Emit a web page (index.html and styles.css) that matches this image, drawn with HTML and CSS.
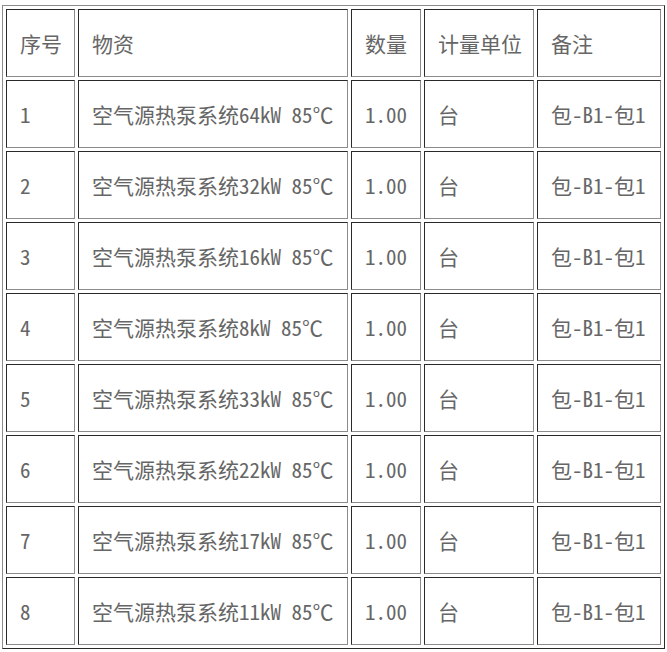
FILE: index.html
```html
<!DOCTYPE html>
<html lang="zh-CN">
<head>
<meta charset="utf-8">
<title>物资清单</title>
<link rel="stylesheet" href="styles.css">
</head>
<body>
<table class="grid">
  <colgroup>
    <col class="c-no">
    <col class="c-name">
    <col class="c-qty">
    <col class="c-unit">
    <col class="c-note">
  </colgroup>
  <thead>
    <tr><th>序号</th><th>物资</th><th>数量</th><th>计量单位</th><th>备注</th></tr>
  </thead>
  <tbody>
    <tr><td>1</td><td>空气源热泵系统64kW 85℃</td><td>1.00</td><td>台</td><td>包-B1-包1</td></tr>
    <tr><td>2</td><td>空气源热泵系统32kW 85℃</td><td>1.00</td><td>台</td><td>包-B1-包1</td></tr>
    <tr><td>3</td><td>空气源热泵系统16kW 85℃</td><td>1.00</td><td>台</td><td>包-B1-包1</td></tr>
    <tr><td>4</td><td>空气源热泵系统8kW 85℃</td><td>1.00</td><td>台</td><td>包-B1-包1</td></tr>
    <tr><td>5</td><td>空气源热泵系统33kW 85℃</td><td>1.00</td><td>台</td><td>包-B1-包1</td></tr>
    <tr><td>6</td><td>空气源热泵系统22kW 85℃</td><td>1.00</td><td>台</td><td>包-B1-包1</td></tr>
    <tr><td>7</td><td>空气源热泵系统17kW 85℃</td><td>1.00</td><td>台</td><td>包-B1-包1</td></tr>
    <tr><td>8</td><td>空气源热泵系统11kW 85℃</td><td>1.00</td><td>台</td><td>包-B1-包1</td></tr>
  </tbody>
</table>
</body>
</html>
```
FILE: styles.css
```css
html, body {
  margin: 0;
  padding: 0;
  background: #ffffff;
}

body {
  padding: 5px 0 0 2px;
}

.grid {
  table-layout: fixed;
  width: 663px;
  border-collapse: separate;
  border-spacing: 3px;
  border-style: solid;
  border-width: 1px;
  border-color: #8c8c8c #2a2a2a #2a2a2a #8c8c8c;
  font-family: "Noto Sans Mono CJK SC", "Noto Sans CJK SC", monospace;
  font-size: 21px;
  font-weight: 300;
  color: #666666;
}

.c-no { width: 69px; }
.c-name { width: 270px; }
.c-qty { width: 70px; }
.c-unit { width: 110px; }
.c-note { width: 124px; }

.grid th,
.grid td {
  box-sizing: border-box;
  height: 68px;
  padding: 0 0 0 13px;
  text-align: left;
  vertical-align: middle;
  font-weight: 300;
  white-space: nowrap;
  overflow: hidden;
  border-style: solid;
  border-width: 1px;
  border-color: #2a2a2a #8c8c8c #8c8c8c #2a2a2a;
}
```
